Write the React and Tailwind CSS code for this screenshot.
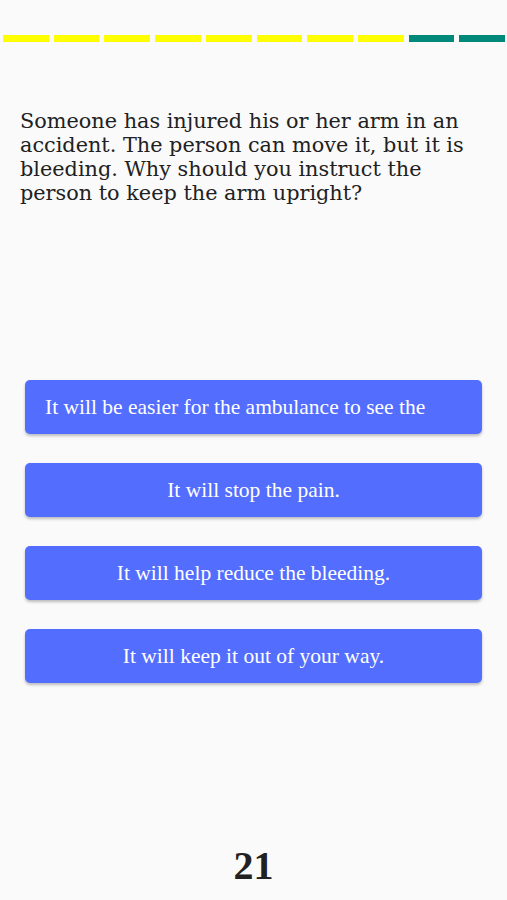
import React from 'react';

const segments = ['y', 'y', 'y', 'y', 'y', 'y', 'y', 'y', 't', 't'];

const answers = [
  { text: 'It will be easier for the ambulance to see the', align: 'left' },
  { text: 'It will stop the pain.', align: 'center' },
  { text: 'It will help reduce the bleeding.', align: 'center' },
  { text: 'It will keep it out of your way.', align: 'center' },
];

export default function App() {
  return (
    <div className="w-full h-[900px] bg-[#fafafa] flex flex-col overflow-hidden">
      {/* Progress */}
      <div className="flex gap-[5px] pl-[3px] pr-[2px] pt-[35px]">
        {segments.map((s, i) => (
          <div key={i} className={`flex-1 h-[7px] ${s === 'y' ? 'bg-[#ffff00]' : 'bg-[#00897b]'}`} />
        ))}
      </div>

      {/* Question */}
      <p className="mt-[67px] px-[20px] text-[20.8px] leading-[24px] text-[#212121] [font-family:'DejaVu_Serif',serif]">
        Someone has injured his or her arm in an accident. The person can move it, but it is bleeding. Why should you instruct the person to keep the arm upright?
      </p>

      {/* Answers */}
      <div className="mt-[175px] px-[25px] flex flex-col gap-[29px]">
        {answers.map((a, i) => (
          <button
            key={i}
            className={`h-[54px] w-full rounded-[5px] bg-[#536dfe] text-white shadow-[0_2px_3px_rgba(0,0,0,0.25)] px-[20px] overflow-hidden whitespace-nowrap text-[21.5px] [font-family:'Liberation_Serif',serif] ${a.align === 'left' ? 'text-left' : 'text-center'}`}
          >
            {a.text}
          </button>
        ))}
      </div>

      <div className="flex-1" />

      {/* Timer */}
      <div className="pb-[4px] text-center text-[40px] font-bold text-[#212121] [font-family:'Liberation_Serif',serif]">
        21
      </div>
    </div>
  );
}
